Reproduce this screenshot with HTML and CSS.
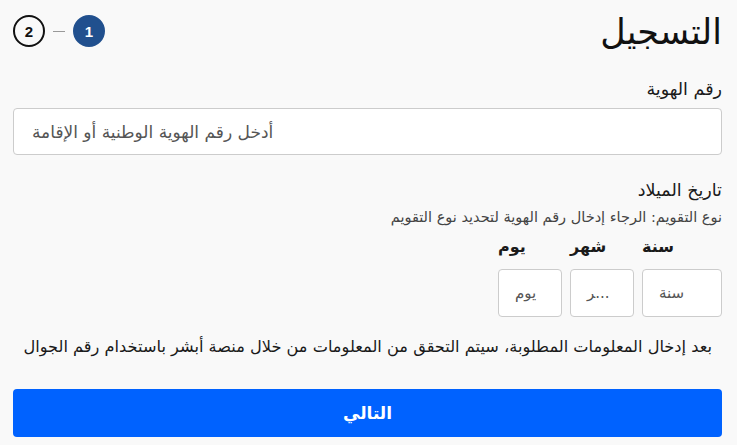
FILE: index.html
```html
<!DOCTYPE html>
<html lang="ar" dir="rtl">
<head>
<meta charset="utf-8">
<link rel="stylesheet" href="styles.css">
</head>
<body>
<div class="page">
  <header class="header">
    <h1 class="title">التسجيل</h1>
    <div class="steps">
      <span class="step step-active">1</span>
      <span class="step-line"></span>
      <span class="step">2</span>
    </div>
  </header>

  <section class="field">
    <label class="label">رقم الهوية</label>
    <div class="input">أدخل رقم الهوية الوطنية أو الإقامة</div>
  </section>

  <section class="dob">
    <div class="label">تاريخ الميلاد</div>
    <div class="hint">نوع التقويم: الرجاء إدخال رقم الهوية لتحديد نوع التقويم</div>
    <div class="date-row">
      <div class="date-col">
        <div class="date-label">سنة</div>
        <div class="date-box date-year">سنة</div>
      </div>
      <div class="date-col">
        <div class="date-label">شهر</div>
        <div class="date-box date-small">&zwj;ر...</div>
      </div>
      <div class="date-col">
        <div class="date-label">يوم</div>
        <div class="date-box date-small">يوم</div>
      </div>
    </div>
  </section>

  <p class="note">بعد إدخال المعلومات المطلوبة، سيتم التحقق من المعلومات من خلال منصة أبشر باستخدام رقم الجوال</p>

  <button class="next">التالي</button>
</div>
</body>
</html>
```

FILE: styles.css
```css
html, body {
  margin: 0;
  padding: 0;
  background: #f9f9f9;
}
body {
  font-family: "DejaVu Sans", sans-serif;
  color: #1a1a1a;
}
.page {
  padding: 12px 15px 0 13px;
  display: flex;
  flex-direction: column;
}
.header {
  display: flex;
  justify-content: space-between;
  align-items: flex-start;
  height: 40px;
}
.title {
  margin: 0;
  font-size: 35px;
  font-weight: normal;
  color: #111;
  line-height: 40px;
}
.steps {
  display: flex;
  align-items: center;
  gap: 8px;
  margin-top: 3px;
}
.step {
  width: 28px;
  height: 28px;
  border: 2px solid #111;
  border-radius: 50%;
  display: flex;
  align-items: center;
  justify-content: center;
  font-size: 15px;
  font-weight: 700;
  color: #111;
  font-family: "Liberation Sans", sans-serif;
}
.step-active {
  background: #21508e;
  border-color: #21508e;
  color: #fff;
}
.step-line {
  width: 12px;
  height: 1px;
  background: #999;
}
.field {
  margin-top: 26px;
  display: flex;
  flex-direction: column;
}
.label {
  font-size: 17.5px;
  color: #1a1a1a;
  line-height: 22px;
}
.input {
  box-sizing: border-box;
  margin-top: 8px;
  height: 47px;
  border: 1px solid #ccc;
  border-radius: 4px;
  background: #fff;
  direction: ltr;
  text-align: left;
  padding: 0 18px;
  display: flex;
  align-items: center;
  font-size: 17px;
  color: #555;
}
.dob {
  margin-top: 24px;
  display: flex;
  flex-direction: column;
}
.hint {
  font-size: 14.5px;
  color: #444;
  margin-top: 6px;
  line-height: 20px;
}
.date-row {
  display: flex;
  gap: 8px;
  margin-top: 9px;
}
.date-col {
  display: flex;
  flex-direction: column;
}
.date-label {
  font-size: 16px;
  font-weight: 700;
  color: #1a1a1a;
  line-height: 22px;
  direction: ltr;
  text-align: left;
}
.date-box {
  box-sizing: border-box;
  margin-top: 11px;
  height: 48px;
  border: 1px solid #ccc;
  border-radius: 4px;
  background: #fff;
  direction: ltr;
  text-align: left;
  padding: 0 16px;
  display: flex;
  align-items: center;
  font-size: 15px;
  color: #555;
}
.date-year { width: 80px; }
.date-small { width: 64px; }
.note {
  margin: 18px 0 0;
  font-size: 16.2px;
  color: #1a1a1a;
  line-height: 24px;
  padding-right: 10px;
  white-space: nowrap;
}
.next {
  margin-top: 30px;
  height: 48px;
  border: none;
  border-radius: 4px;
  background: #0062ff;
  color: #fff;
  font-family: inherit;
  font-size: 17px;
  font-weight: 700;
}
```
